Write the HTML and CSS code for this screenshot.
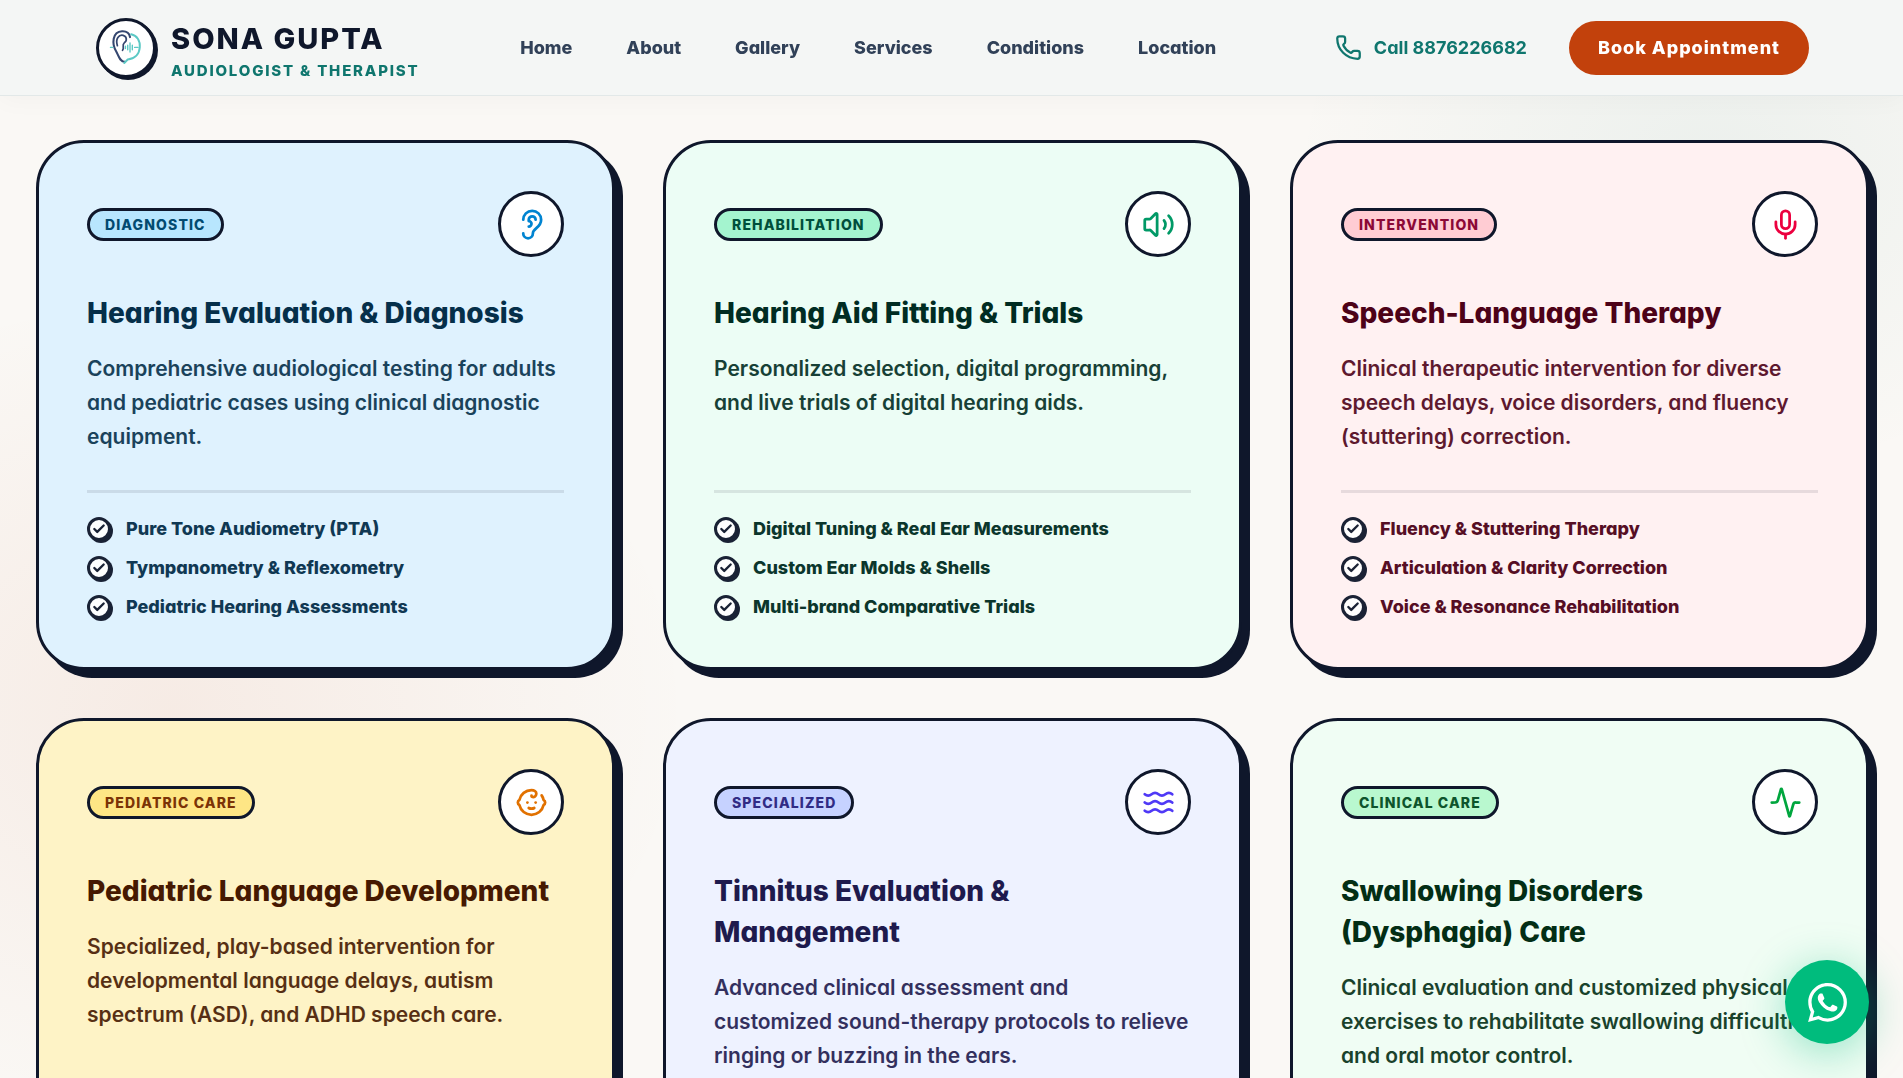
FILE: index.html
```html
<!DOCTYPE html>
<html lang="en">
<head>
<meta charset="utf-8">
<meta name="viewport" content="width=device-width, initial-scale=1">
<title>Sona Gupta - Audiologist &amp; Therapist</title>
<link rel="stylesheet" href="styles.css">
</head>
<body>

<!-- Shared check mark -->
<svg class="sprite" aria-hidden="true">
    <symbol id="check" viewBox="0 0 24 24"><path d="M20 6 9 17l-5-5"/></symbol>
</svg>

<header class="header">
    <a class="brand" href="#home">
        <span class="logo">
            <svg viewBox="7 8 47 47" fill="none" stroke-linecap="round">
                <g stroke="#34466f" stroke-width="1.8">
                    <path d="M29.500 43.500C25 43.500 24 38 22 34.500C18 28 18.500 17.500 27 17C31 16.800 33.500 19 34 22"/>
                    <path d="M23 29.500C21 23 24.500 19.800 28 20.500C31.500 21.500 31.500 25.500 29 27C26.500 29 29.500 31 27.500 33.500" stroke-width="1.500"/>
                </g>
                <g stroke="#5cc9c5">
                    <path d="M35 19.500C40 20.500 43 25 42.500 31C42 37 38 41 32 41.500L29 44.500" stroke-width="1.700"/>
                    <path d="M17 31h2M30 30v2M32 29v4M34 27v8M36 29v4M38 31h3" stroke-width="1.200"/>
                </g>
            </svg>
        </span>
        <span class="brand-text">
            <span class="brand-name">SONA GUPTA</span>
            <span class="brand-role">AUDIOLOGIST &amp; THERAPIST</span>
        </span>
    </a>
    <nav class="nav">
        <a href="#home">Home</a>
        <a href="#about">About</a>
        <a href="#gallery">Gallery</a>
        <a href="#services">Services</a>
        <a href="#conditions">Conditions</a>
        <a href="#location">Location</a>
    </nav>
    <div class="actions">
        <a class="call" href="tel:8876226682">
            <svg viewBox="0 0 24 24"><path d="M13.832 16.568a1 1 0 0 0 1.213-.303l.355-.465A2 2 0 0 1 17 15h3a2 2 0 0 1 2 2v3a2 2 0 0 1-2 2A18 18 0 0 1 2 4a2 2 0 0 1 2-2h3a2 2 0 0 1 2 2v3a2 2 0 0 1-.8 1.600l-.468.351a1 1 0 0 0-.292 1.233 14 14 0 0 0 6.392 6.384"/></svg>
            Call 8876226682
        </a>
        <button class="book" type="button">Book Appointment</button>
    </div>
</header>

<main class="services" id="services">

    <article class="card sky">
        <div class="card-top">
            <span class="badge">DIAGNOSTIC</span>
            <span class="icon"><svg viewBox="0 0 24 24"><path d="M6 8.500a6.500 6.500 0 1 1 13 0c0 6-6 6-6 10a3.500 3.500 0 1 1-7 0"/><path d="M15 8.500a2.500 2.500 0 0 0-5 0v1a2 2 0 1 1 0 4"/></svg></span>
        </div>
        <h3>Hearing Evaluation &amp; Diagnosis</h3>
        <p>Comprehensive audiological testing for adults and pediatric cases using clinical diagnostic equipment.</p>
        <ul>
            <li><span class="tick"><svg><use href="#check"/></svg></span>Pure Tone Audiometry (PTA)</li>
            <li><span class="tick"><svg><use href="#check"/></svg></span>Tympanometry &amp; Reflexometry</li>
            <li><span class="tick"><svg><use href="#check"/></svg></span>Pediatric Hearing Assessments</li>
        </ul>
    </article>

    <article class="card emerald">
        <div class="card-top">
            <span class="badge">REHABILITATION</span>
            <span class="icon"><svg viewBox="0 0 24 24"><path d="M11 4.702a.705.705 0 0 0-1.203-.498L6.413 7.587A1.400 1.400 0 0 1 5.416 8H3a1 1 0 0 0-1 1v6a1 1 0 0 0 1 1h2.416a1.400 1.400 0 0 1 .997.413l3.383 3.384A.705.705 0 0 0 11 19.298z"/><path d="M16 9a5 5 0 0 1 0 6"/><path d="M19.364 18.364a9 9 0 0 0 0-12.728"/></svg></span>
        </div>
        <h3>Hearing Aid Fitting &amp; Trials</h3>
        <p>Personalized selection, digital programming, and live trials of digital hearing aids.</p>
        <ul>
            <li><span class="tick"><svg><use href="#check"/></svg></span>Digital Tuning &amp; Real Ear Measurements</li>
            <li><span class="tick"><svg><use href="#check"/></svg></span>Custom Ear Molds &amp; Shells</li>
            <li><span class="tick"><svg><use href="#check"/></svg></span>Multi-brand Comparative Trials</li>
        </ul>
    </article>

    <article class="card rose">
        <div class="card-top">
            <span class="badge">INTERVENTION</span>
            <span class="icon"><svg viewBox="0 0 24 24"><path d="M12 19v3"/><path d="M19 10v2a7 7 0 0 1-14 0v-2"/><rect x="9" y="2" width="6" height="13" rx="3"/></svg></span>
        </div>
        <h3>Speech-Language Therapy</h3>
        <p>Clinical therapeutic intervention for diverse speech delays, voice disorders, and fluency (stuttering) correction.</p>
        <ul>
            <li><span class="tick"><svg><use href="#check"/></svg></span>Fluency &amp; Stuttering Therapy</li>
            <li><span class="tick"><svg><use href="#check"/></svg></span>Articulation &amp; Clarity Correction</li>
            <li><span class="tick"><svg><use href="#check"/></svg></span>Voice &amp; Resonance Rehabilitation</li>
        </ul>
    </article>

    <article class="card amber">
        <div class="card-top">
            <span class="badge">PEDIATRIC CARE</span>
            <span class="icon"><svg viewBox="0 0 24 24"><path d="M10 16c.5.3 1.200.5 2 .5s1.500-.2 2-.5"/><path d="M15 12h.01"/><path d="M19.380 6.813A9 9 0 0 1 20.800 10.200a2 2 0 0 1 0 3.600 9 9 0 0 1-17.600 0 2 2 0 0 1 0-3.600A9 9 0 0 1 12 3c2 0 3.500 1.100 3.500 2.500s-.9 2.500-2 2.500c-.8 0-1.500-.4-1.500-1"/><path d="M9 12h.01"/></svg></span>
        </div>
        <h3>Pediatric Language Development</h3>
        <p>Specialized, play-based intervention for developmental language delays, autism spectrum (ASD), and ADHD speech care.</p>
    </article>

    <article class="card indigo">
        <div class="card-top">
            <span class="badge">SPECIALIZED</span>
            <span class="icon"><svg viewBox="0 0 24 24"><path d="M2 6c.6.5 1.200 1 2.500 1C7 7 7 5 9.500 5c2.600 0 2.400 2 5 2 2.500 0 2.500-2 5-2 1.300 0 1.900.5 2.500 1"/><path d="M2 12c.6.5 1.200 1 2.500 1 2.500 0 2.500-2 5-2 2.600 0 2.400 2 5 2 2.500 0 2.500-2 5-2 1.300 0 1.900.5 2.500 1"/><path d="M2 18c.6.5 1.200 1 2.500 1 2.500 0 2.500-2 5-2 2.600 0 2.400 2 5 2 2.500 0 2.500-2 5-2 1.300 0 1.900.5 2.500 1"/></svg></span>
        </div>
        <h3>Tinnitus Evaluation&nbsp;&amp; Management</h3>
        <p>Advanced clinical assessment and customized sound-therapy protocols to relieve ringing or buzzing in the ears.</p>
    </article>

    <article class="card green">
        <div class="card-top">
            <span class="badge">CLINICAL CARE</span>
            <span class="icon"><svg viewBox="0 0 24 24"><path d="M22 12h-2.480a2 2 0 0 0-1.930 1.460l-2.350 8.360a.25.25 0 0 1-.48 0L9.240 2.180a.25.25 0 0 0-.48 0l-2.350 8.360A2 2 0 0 1 4.490 12H2"/></svg></span>
        </div>
        <h3>Swallowing Disorders (Dysphagia) Care</h3>
        <p>Clinical evaluation and customized physical exercises to rehabilitate swallowing difficulties and oral motor control.</p>
    </article>

</main>

<a class="whatsapp" href="#whatsapp" aria-label="Chat on WhatsApp">
    <svg viewBox="0 0 24 24"><path d="M17.472 14.382c-.297-.149-1.758-.867-2.030-.967-.273-.099-.471-.148-.67.150-.197.297-.767.966-.94 1.164-.173.199-.347.223-.644.075-.297-.150-1.255-.463-2.390-1.475-.883-.788-1.480-1.761-1.653-2.059-.173-.297-.018-.458.130-.606.134-.133.298-.347.446-.52.149-.174.198-.298.298-.497.099-.198.050-.371-.025-.52-.075-.149-.669-1.612-.916-2.207-.242-.579-.487-.5-.669-.510-.173-.008-.371-.010-.57-.010-.198 0-.52.074-.792.372-.272.297-1.040 1.016-1.040 2.479 0 1.462 1.065 2.875 1.213 3.074.149.198 2.096 3.200 5.077 4.487.709.306 1.262.489 1.694.625.712.227 1.360.195 1.871.118.571-.085 1.758-.719 2.006-1.413.248-.694.248-1.289.173-1.413-.074-.124-.272-.198-.57-.347m-5.421 7.403h-.004a9.870 9.870 0 0 1-5.031-1.378l-.361-.214-3.741.982.998-3.648-.235-.374a9.860 9.860 0 0 1-1.510-5.260c.001-5.450 4.436-9.884 9.888-9.884 2.640 0 5.122 1.030 6.988 2.898a9.825 9.825 0 0 1 2.893 6.994c-.003 5.450-4.437 9.884-9.885 9.884m8.413-18.297A11.815 11.815 0 0 0 12.050 0C5.495 0 .16 5.335.157 11.892c0 2.096.547 4.142 1.588 5.945L.057 24l6.305-1.654a11.882 11.882 0 0 0 5.683 1.448h.005c6.554 0 11.890-5.335 11.893-11.893a11.821 11.821 0 0 0-3.480-8.413Z"/></svg>
</a>

</body>
</html>
```
FILE: styles.css
```css
* {
    box-sizing: border-box;
}

body {
    margin: 0;
    font-family: Inter, "Liberation Sans", sans-serif;
    font-feature-settings: "cv11";
    color: #0f172b;
    background-color: #faf8f5;
    /* soft colour clouds behind the cards */
    background-image:
        radial-gradient(420px 320px at 90% 15%, rgba(15, 118, 110, 0.06), transparent),
        radial-gradient(520px 420px at 9% 66%, rgba(194, 65, 12, 0.07), transparent);
    background-attachment: fixed;
}

a {
    text-decoration: none;
}

.sprite {
    display: none;
}

/* Header */
.header {
    position: fixed;
    top: 0;
    left: 0;
    right: 0;
    z-index: 10;
    display: flex;
    align-items: center;
    justify-content: space-between;
    height: 96px;
    padding: 0 94px 0 96px;
    background-color: #f4f6f5;
    border-bottom: 1px solid #e2e8e8;
    box-shadow: 0 4px 24px rgba(15, 23, 43, 0.03);
}

.brand {
    display: flex;
    align-items: center;
    gap: 15px;
}

.logo {
    width: 60px;
    height: 60px;
    border: 3px solid #0f172b;
    border-radius: 50%;
    background-color: white;
    box-shadow: 2px 2px 0 #0f172b;
}

.logo svg {
    display: block;
    width: 54px;
    height: 54px;
}

.brand-text {
    display: flex;
    flex-direction: column;
}

.brand-name {
    font-size: 29px;
    font-weight: 800;
    line-height: 46px;
    letter-spacing: 2px;
    color: #0f172b;
}

.brand-role {
    font-size: 15px;
    font-weight: 800;
    line-height: 17px;
    letter-spacing: 0.12em;
    color: #0f766e;
}

.nav {
    display: flex;
    gap: 54px;
    margin-right: 18px;
}

.nav a {
    font-size: 18px;
    font-weight: 800;
    color: #314158;
}

.actions {
    display: flex;
    align-items: center;
    gap: 42px;
}

.call {
    display: flex;
    align-items: center;
    gap: 12px;
    font-size: 18px;
    font-weight: 700;
    color: #0f766e;
}

.call svg {
    width: 27px;
    height: 27px;
    fill: none;
    stroke: currentColor;
    stroke-width: 2;
    stroke-linecap: round;
    stroke-linejoin: round;
}

.book {
    height: 54px;
    padding: 0 29px;
    border: 0;
    border-radius: 27px;
    background-color: #c2410c;
    color: white;
    font: inherit;
    font-feature-settings: inherit;
    font-size: 18px;
    font-weight: 800;
    letter-spacing: 1px;
    cursor: pointer;
}

/* Service cards */
.services {
    display: grid;
    grid-template-columns: repeat(3, 1fr);
    gap: 48px;
    padding: 140px 34px 48px 36px;
}

.card {
    display: flex;
    flex-direction: column;
    min-height: 530px;
    padding: 48px;
    border: 3px solid #0f172b;
    border-radius: 48px;
    box-shadow: 8px 8px 0 #0f172b;
}

.card-top {
    display: flex;
    align-items: center;
    justify-content: space-between;
    margin-bottom: 36px;
}

.badge {
    padding: 0 15px;
    border: 3px solid #0f172b;
    border-radius: 17px;
    font-size: 14px;
    font-weight: 800;
    line-height: 27px;
    letter-spacing: 0.08em;
}

.icon {
    display: flex;
    align-items: center;
    justify-content: center;
    width: 66px;
    height: 66px;
    border: 3px solid #0f172b;
    border-radius: 50%;
    background-color: white;
}

.icon svg {
    width: 33px;
    height: 33px;
    fill: none;
    stroke: currentColor;
    stroke-width: 2;
    stroke-linecap: round;
    stroke-linejoin: round;
}

.card h3 {
    margin: 0 0 18px;
    font-size: 28px;
    font-weight: 800;
    line-height: 41px;
    text-wrap: balance;
}

.card p {
    margin: 0 0 36px;
    font-size: 21px;
    font-weight: 600;
    line-height: 34px;
    opacity: 0.9;
}

.card ul {
    display: flex;
    flex-direction: column;
    gap: 15px;
    margin: auto 0 0;
    padding: 24px 0 0;
    border-top: 3px solid rgba(15, 23, 43, 0.1);
    list-style: none;
}

.card li {
    display: flex;
    align-items: center;
    gap: 15px;
    font-size: 18px;
    font-weight: 800;
    line-height: 24px;
    opacity: 0.95;
}

.tick {
    display: flex;
    align-items: center;
    justify-content: center;
    width: 24px;
    height: 24px;
    border: 3px solid #0f172b;
    border-radius: 50%;
    background-color: white;
    box-shadow: 2px 2px 0 #0f172b;
}

.tick svg {
    width: 14px;
    height: 14px;
    fill: none;
    stroke: #0f172b;
    stroke-width: 4;
    stroke-linecap: round;
    stroke-linejoin: round;
}

/* Card colours */
.sky { background-color: #dff2fe; color: #052f4a; }
.sky .badge { background-color: #b8e6fe; color: #024a70; }
.sky .icon { color: #0084d1; }

.emerald { background-color: #ecfdf5; color: #002c22; }
.emerald .badge { background-color: #a4f4cf; color: #004f3b; }
.emerald .icon { color: #009966; }

.rose { background-color: #fff1f2; color: #4d0218; }
.rose .badge { background-color: #ffccd3; color: #8b0836; }
.rose .icon { color: #ec003f; }

.amber { background-color: #fef3c6; color: #461901; }
.amber .badge { background-color: #fee685; color: #7b3306; }
.amber .icon { color: #e17100; }

.indigo { background-color: #eef2ff; color: #1e1a4d; }
.indigo .badge { background-color: #c6d2ff; color: #312c85; }
.indigo .icon { color: #4f39f6; }

.green { background-color: #f0fdf4; color: #032e15; }
.green .badge { background-color: #b9f8cf; color: #0d542b; }
.green .icon { color: #00a63e; }

/* Floating chat button */
.whatsapp {
    position: fixed;
    right: 34px;
    bottom: 34px;
    z-index: 10;
    display: flex;
    align-items: center;
    justify-content: center;
    width: 84px;
    height: 84px;
    border-radius: 50%;
    background-color: #00bc7d;
    box-shadow: 0 8px 45px rgba(0, 188, 125, 0.4);
}

.whatsapp svg {
    width: 39px;
    height: 39px;
    fill: white;
}
```
